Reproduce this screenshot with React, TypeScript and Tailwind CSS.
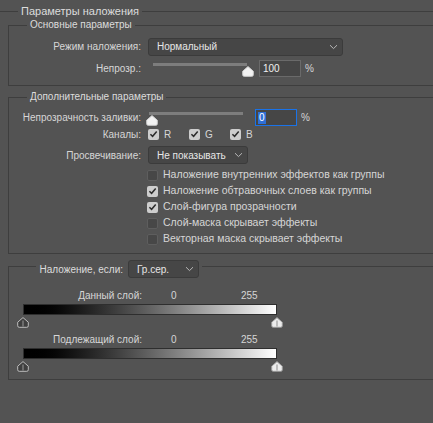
import React from "react";

const font = { fontFamily: '"Liberation Sans", Arial, sans-serif' };

function Chevron() {
  return (
    <svg width="9" height="6" viewBox="0 0 9 6" className="shrink-0">
      <path d="M1 1.2 L4.5 4.6 L8 1.2" fill="none" stroke="#b8b8b8" strokeWidth="1" />
    </svg>
  );
}

function Select({ value, width }: { value: string; width: string }) {
  return (
    <div
      className={`${width} h-[18px] flex items-center justify-between pl-[8px] pr-[4px] rounded-[3px] bg-[#464646] border border-[#3b3b3b] text-[#e6e6e6] whitespace-nowrap`}
    >
      <span>{value}</span>
      <Chevron />
    </div>
  );
}

function Thumb({ variant }: { variant: "white" | "dark" }) {
  const fill = variant === "white" ? "#ececec" : "#3f3f3f";
  const stroke = variant === "white" ? "#9a9a9a" : "#bdbdbd";
  const mid = variant === "white" ? "#8d8d8d" : "#9a9a9a";
  return (
    <svg width="12" height="11" viewBox="0 0 12 11" className="shrink-0">
      <path
        d="M6 0.6 L11.3 5.2 V8.8 Q11.3 10.3 9.8 10.3 H2.2 Q0.7 10.3 0.7 8.8 V5.2 Z"
        fill={fill}
        stroke={stroke}
        strokeWidth="1"
      />
      <line x1="6" y1="3.5" x2="6" y2="9.5" stroke={mid} strokeWidth="1" />
    </svg>
  );
}

function SliderThumb() {
  return (
    <svg width="12" height="11" viewBox="0 0 12 11" className="shrink-0">
      <path
        d="M6 0.6 L11.3 5.2 V8.8 Q11.3 10.3 9.8 10.3 H2.2 Q0.7 10.3 0.7 8.8 V5.2 Z"
        fill="#f2f2f2"
        stroke="#cfcfcf"
        strokeWidth="1"
      />
    </svg>
  );
}

function Check({ checked }: { checked: boolean }) {
  return checked ? (
    <span className="w-[11px] h-[11px] rounded-[2px] bg-[#cdcdcd] flex items-center justify-center shrink-0">
      <svg width="9" height="8" viewBox="0 0 9 8">
        <path d="M1.4 4.2 L3.6 6.3 L7.7 1.5" fill="none" stroke="#2c2c2c" strokeWidth="1.5" />
      </svg>
    </span>
  ) : (
    <span className="w-[11px] h-[11px] rounded-[2px] bg-[#474747] border border-[#5e5e5e] shrink-0" />
  );
}

function Slider({ at }: { at: "start" | "end" }) {
  return (
    <div className="w-[104px] h-[17px] flex flex-col">
      <div className="mt-[3px] mx-[5px] h-[3px] bg-[#7d7d7d]" />
      <div className={`flex ${at === "end" ? "justify-end -mr-[2px]" : "justify-start pl-[2px]"}`}>
        <SliderThumb />
      </div>
    </div>
  );
}

function Label({ children }: { children: React.ReactNode }) {
  return <span className="w-[132px] text-right shrink-0 whitespace-nowrap">{children}</span>;
}

function GroupTitle({ children, big }: { children: React.ReactNode; big?: boolean }) {
  return (
    <div
      className={`-mt-[8px] ml-[18px] w-fit px-[3px] h-[14px] leading-[14px] bg-[#535353] text-[#dcdcdc] ${big ? "text-[11px]" : ""}`}
    >
      {children}
    </div>
  );
}

function BlendBar({ label }: { label: string }) {
  return (
    <>
      <div className="flex h-[14px] items-center text-[#d6d6d6]">
        <span className="w-[133px] text-right shrink-0">{label}</span>
        <span className="ml-[29px] w-[70px]">0</span>
        <span>255</span>
      </div>
      <div className="mt-[2px] ml-[14px] w-[254px] h-[11px] border border-[#2e2e2e] bg-gradient-to-r from-[#000000] to-[#ffffff]" />
      <div className="mt-[2px] ml-[8px] w-[266px] flex justify-between">
        <Thumb variant="dark" />
        <Thumb variant="white" />
      </div>
    </>
  );
}

const extras = [
  { text: "Наложение внутренних эффектов как группы", checked: false },
  { text: "Наложение обтравочных слоев как группы", checked: true },
  { text: "Слой-фигура прозрачности", checked: true },
  { text: "Слой-маска скрывает эффекты", checked: false },
  { text: "Векторная маска скрывает эффекты", checked: false },
];

export default function App() {
  return (
    <div
      className="w-[433px] h-[423px] bg-[#535353] overflow-hidden pt-[11px] text-[10px] text-[#d6d6d6]"
      style={font}
    >
      <div className="border-t border-[#3e3e3e]">
        <GroupTitle big>Параметры наложения</GroupTitle>

        {/* Основные параметры */}
        <div className="mt-[7px] ml-[8px] w-[440px] border-t border-l border-b border-[#3e3e3e] pb-[8px]">
          <GroupTitle>Основные параметры</GroupTitle>
          <div className="mt-[5px] flex items-center h-[19px] gap-[7px]">
            <Label>Режим наложения:</Label>
            <Select value="Нормальный" width="w-[195px]" />
          </div>
          <div className="mt-[4px] flex items-center h-[17px]">
            <Label>Непрозр.:</Label>
            <div className="ml-[7px] flex items-center">
              <Slider at="end" />
              <div className="ml-[7px] w-[42px] h-[17px] border border-[#6a6a6a] bg-[#464646] pl-[3px] leading-[15px] text-[#f0f0f0]">
                100
              </div>
              <span className="ml-[4px]">%</span>
            </div>
          </div>
        </div>

        {/* Дополнительные параметры */}
        <div className="mt-[11px] ml-[8px] w-[440px] border-t border-l border-b border-[#3e3e3e] pb-[6px]">
          <GroupTitle>Дополнительные параметры</GroupTitle>
          <div className="mt-[5px] flex items-center h-[17px]">
            <Label>Непрозрачность заливки:</Label>
            <div className="ml-[3px] flex items-center">
              <Slider at="start" />
              <div className="ml-[7px] w-[42px] h-[17px] border border-[#1a73e8] bg-[#464646] pl-[2px] flex items-center">
                <span className="bg-[#2f6fd6] text-white leading-[12px] px-[1px]">0</span>
              </div>
              <span className="ml-[4px]">%</span>
            </div>
          </div>
          <div className="flex items-center h-[16px] gap-[7px]">
            <Label>Каналы:</Label>
            <div className="flex">
              {["R", "G", "B"].map((c) => (
                <div key={c} className="w-[41px] flex items-center gap-[5px]">
                  <Check checked />
                  <span>{c}</span>
                </div>
              ))}
            </div>
          </div>
          <div className="mt-[4px] flex items-center h-[18px] gap-[7px]">
            <Label>Просвечивание:</Label>
            <Select value="Не показывать" width="w-[100px]" />
          </div>
          <div className="mt-[3px] ml-[138px] flex flex-col text-[10.5px]">
            {extras.map((e) => (
              <div key={e.text} className="h-[16px] flex items-center gap-[5px]">
                <Check checked={e.checked} />
                <span>{e.text}</span>
              </div>
            ))}
          </div>
        </div>

        {/* Наложение, если */}
        <div className="mt-[12px] ml-[8px] w-[440px] border-t border-l border-b border-[#3e3e3e] pb-[7px]">
          <div className="-mt-[7px] ml-[27px] w-fit px-[3px] h-[18px] bg-[#535353] flex items-center gap-[5px]">
            <span className="w-[84px] text-right text-[#dcdcdc]">Наложение, если:</span>
            <Select value="Гр.сер." width="w-[71px]" />
          </div>
          <div className="mt-[10px]">
            <BlendBar label="Данный слой:" />
          </div>
          <div className="mt-[4px]">
            <BlendBar label="Подлежащий слой:" />
          </div>
        </div>
      </div>
    </div>
  );
}
